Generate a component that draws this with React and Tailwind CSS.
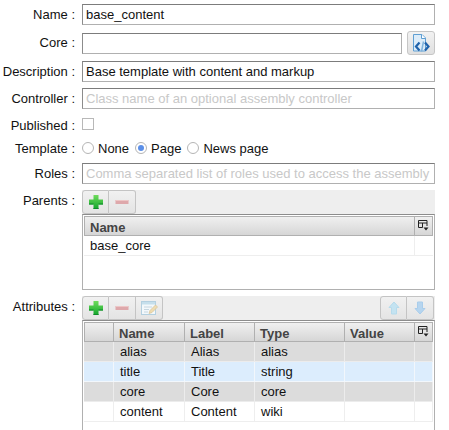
import React from 'react';

const FONT = "font-['Liberation_Sans',Arial,sans-serif]";

const Label = ({ children, className = '' }) => (
  <div className={`w-[75px] shrink-0 text-right text-[13px] leading-[15px] text-[#111] whitespace-nowrap ${className}`}>{children}</div>
);

const Field = ({ value, placeholder, className = 'w-[353px]' }) => (
  <div className={`h-[21px] border border-[#b0b0b0] border-t-[#7c7c7c] border-l-[#8c8c8c] bg-white pl-[3px] text-[13px] leading-[19px] whitespace-nowrap overflow-hidden ${className} ${value ? 'text-[#111]' : 'text-[#c8c8c8]'}`}>
    {value || placeholder}
  </div>
);

const PlusIcon = () => (
  <svg width="16" height="16" viewBox="0 0 16 16">
    <defs>
      <linearGradient id="plusFill" x1="0" y1="0" x2="0" y2="1">
        <stop offset="0" stopColor="#6fdc5c" />
        <stop offset="1" stopColor="#12a52c" />
      </linearGradient>
    </defs>
    <path d="M5.500 1h5v4.500H15v5h-4.500V15h-5v-4.500H1v-5h4.500z" fill="url(#plusFill)" />
    <path d="M5.500 15h5v-1h-5zM1 10.500h4.500v-1H1zM10.500 10.500H15v-1h-4.500z" fill="#0f8a2a" />
  </svg>
);

const MinusIcon = () => (
  <svg width="16" height="16" viewBox="0 0 16 16">
    <rect x="1.500" y="6" width="13" height="4" fill="#dea8ab" />
    <rect x="1.500" y="6" width="13" height="1" fill="#edc6c6" />
  </svg>
);

const EditIcon = () => (
  <svg width="18" height="18" viewBox="0 0 18 18">
    <rect x="1.500" y="2.500" width="14" height="13" fill="#f3f8fb" stroke="#b4d0e0" />
    <rect x="2" y="3" width="13" height="2.500" fill="#c6dfec" />
    <path d="M4 8h8M4 10.500h5M4 13h4" stroke="#c6d6e0" strokeWidth="1" />
    <path d="M9 14.500l1-3 5.500-5.500 2 2L12 13.500z" fill="#efdcb0" stroke="#d8c59c" strokeWidth="0.800" />
  </svg>
);

const UpIcon = () => (
  <svg width="16" height="16" viewBox="0 0 16 16">
    <path d="M8 2L13 7.500H10.500V14H5.500V7.500H3z" fill="#c4e3f1" stroke="#b6dbec" />
  </svg>
);

const DownIcon = () => (
  <svg width="16" height="16" viewBox="0 0 16 16">
    <path d="M8 14L13 8.500H10.500V2H5.500V8.500H3z" fill="#b6d5ef" stroke="#a9cdeb" />
  </svg>
);

const SourceIcon = () => (
  <svg width="20" height="20" viewBox="0 0 20 20">
    <path d="M2.500 1.500h8.500l3.500 3.500v13h-12z" fill="#dcecf9" stroke="#5f9fd3" />
    <path d="M10.500 1.500v4h4" fill="#ffffff" stroke="#5f9fd3" />
    <path d="M8.500 9.500L5 13.500l3.500 4" fill="none" stroke="#1f62ab" strokeWidth="2.200" />
    <path d="M14 9.500l3.500 4-3.500 4" fill="none" stroke="#1f62ab" strokeWidth="2.200" />
    <path d="M12.500 8.500l-2 10" stroke="#7fb3dc" strokeWidth="1.500" />
  </svg>
);

const ColumnsIcon = () => (
  <svg width="11" height="11" viewBox="0 0 11 11">
    <path d="M.5 7.500V.5h8.500V6M.5 3h8.500M4.500 3v4.500M.5 7.500h4" fill="none" stroke="#222" strokeWidth="1" />
    <path d="M5.500 7.500h5L8 10.500z" fill="#222" />
  </svg>
);

const ToolButton = ({ children, first, last }) => (
  <div className={`w-[27px] h-[24px] flex items-center justify-center border-y border-r border-[#c4c4c4] bg-gradient-to-b from-[#f1f1f1] to-[#e4e4e4] ${first ? 'border-l rounded-l-[3px]' : ''} ${last ? 'rounded-r-[3px]' : ''}`}>
    {children}
  </div>
);

const Radio = ({ checked, label }) => (
  <div className="flex items-center">
    <span className="w-[12px] h-[12px] rounded-full border border-[#b5b5b5] bg-white flex items-center justify-center">
      {checked && <span className="w-[6px] h-[6px] rounded-full bg-[#5b8fe8]" />}
    </span>
    <span className="ml-[4px] text-[13px] leading-[15px] text-[#111]">{label}</span>
  </div>
);

const HeaderCell = ({ children, className = '' }) => (
  <div className={`h-[20px] border-y border-r border-[#b0b0b0] bg-gradient-to-b from-[#f0f0f0] to-[#d6d6d6] pl-[5px] text-[13px] font-bold leading-[22px] text-[#444] ${className}`}>
    {children}
  </div>
);

const attributes = [
  { name: 'alias', label: 'Alias', type: 'alias', bg: 'bg-[#dcdcdc]', line: 'border-[#ececec]' },
  { name: 'title', label: 'Title', type: 'string', bg: 'bg-[#dcedfd]', line: 'border-[#f2f7fc]' },
  { name: 'core', label: 'Core', type: 'core', bg: 'bg-[#dcdcdc]', line: 'border-[#ececec]' },
  { name: 'content', label: 'Content', type: 'wiki', bg: 'bg-white', line: 'border-[#eeeeee]' },
];

const Cell = ({ children, width, line }) => (
  <div className={`${width} h-[20px] border-r border-b ${line} pl-[6px] text-[13px] leading-[19px] text-[#111]`}>{children}</div>
);

export default function App() {
  return (
    <div className={`${FONT} w-[449px] h-[430px] overflow-hidden bg-white pt-[4px]`}>
      <div className="flex items-start gap-[7px]">
        <Label className="pt-[3px]">Name :</Label>
        <Field value="base_content" />
      </div>

      <div className="flex items-start gap-[7px] mt-[6px]">
        <Label className="pt-[4px]">Core :</Label>
        <div className="flex items-start">
          <Field className="w-[320px] mt-[2px]" />
          <div className="ml-[5px] w-[28px] h-[24px] flex items-center justify-center rounded-[3px] border border-[#c6c6c6] bg-gradient-to-b from-[#f2f2f2] to-[#e0e0e0]">
            <SourceIcon />
          </div>
        </div>
      </div>

      <div className="flex items-start gap-[7px] mt-[6px]">
        <Label className="pt-[3px]">Description :</Label>
        <Field value="Base template with content and markup" />
      </div>

      <div className="flex items-start gap-[7px] mt-[6px]">
        <Label className="pt-[3px]">Controller :</Label>
        <Field placeholder="Class name of an optional assembly controller" />
      </div>

      <div className="flex items-start gap-[7px] mt-[9px]">
        <Label>Published :</Label>
        <span className="w-[12px] h-[12px] border border-[#b8b8b8] bg-white" />
      </div>

      <div className="flex items-center gap-[7px] mt-[7px]">
        <Label className="pt-[1px]">Template :</Label>
        <div className="flex items-center gap-[6px]">
          <Radio label="None" />
          <Radio checked label="Page" />
          <Radio label="News page" />
        </div>
      </div>

      <div className="flex items-start gap-[7px] mt-[7px]">
        <Label className="pt-[3px]">Roles :</Label>
        <Field placeholder="Comma separated list of roles used to access the assembly" />
      </div>

      <div className="flex items-start gap-[7px] mt-[6px]">
        <Label className="pt-[3px]">Parents :</Label>
        <div className="w-[353px]">
          <div className="h-[24px] bg-[#eeeeee] flex">
            <ToolButton first><PlusIcon /></ToolButton>
            <ToolButton last><MinusIcon /></ToolButton>
          </div>
          <div className="h-[76px] border border-[#b0b0b0] border-t-[#8c8c8c] bg-white px-[1px] pt-[1px]">
            <div className="flex">
              <HeaderCell className="flex-1 border-l">Name</HeaderCell>
              <HeaderCell className="w-[18px] !pl-[3px] pt-[3px]"><ColumnsIcon /></HeaderCell>
            </div>
            <div className="flex">
              <div className="flex-1 h-[20px] border-r border-b border-[#eeeeee] pl-[6px] text-[13px] leading-[19px] text-[#111]">base_core</div>
              <div className="w-[18px] h-[20px] border-b border-[#eeeeee]" />
            </div>
          </div>
        </div>
      </div>

      <div className="flex items-start gap-[7px] mt-[6px]">
        <Label className="pt-[3px]">Attributes :</Label>
        <div className="w-[353px]">
          <div className="h-[24px] bg-[#eeeeee] flex justify-between">
            <div className="flex">
              <ToolButton first><PlusIcon /></ToolButton>
              <ToolButton><MinusIcon /></ToolButton>
              <ToolButton last><EditIcon /></ToolButton>
            </div>
            <div className="flex mr-[1px]">
              <ToolButton first><UpIcon /></ToolButton>
              <ToolButton last><DownIcon /></ToolButton>
            </div>
          </div>
          <div className="h-[110px] border border-[#b0b0b0] border-t-[#8c8c8c] border-b-0 bg-white px-[1px] pt-[1px]">
            <div className="flex">
              <HeaderCell className="w-[30px] border-l" />
              <HeaderCell className="w-[71px]">Name</HeaderCell>
              <HeaderCell className="w-[70px]">Label</HeaderCell>
              <HeaderCell className="w-[90px]">Type</HeaderCell>
              <HeaderCell className="w-[70px]">Value</HeaderCell>
              <HeaderCell className="w-[18px] !pl-[3px] pt-[3px]"><ColumnsIcon /></HeaderCell>
            </div>
            {attributes.map((row) => (
              <div key={row.name} className={`flex ${row.bg}`}>
                <Cell width="w-[30px]" line={row.line} />
                <Cell width="w-[71px]" line={row.line}>{row.name}</Cell>
                <Cell width="w-[70px]" line={row.line}>{row.label}</Cell>
                <Cell width="w-[90px]" line={row.line}>{row.type}</Cell>
                <Cell width="w-[70px]" line={row.line} />
                <Cell width="w-[18px]" line={row.line} />
              </div>
            ))}
          </div>
        </div>
      </div>
    </div>
  );
}
